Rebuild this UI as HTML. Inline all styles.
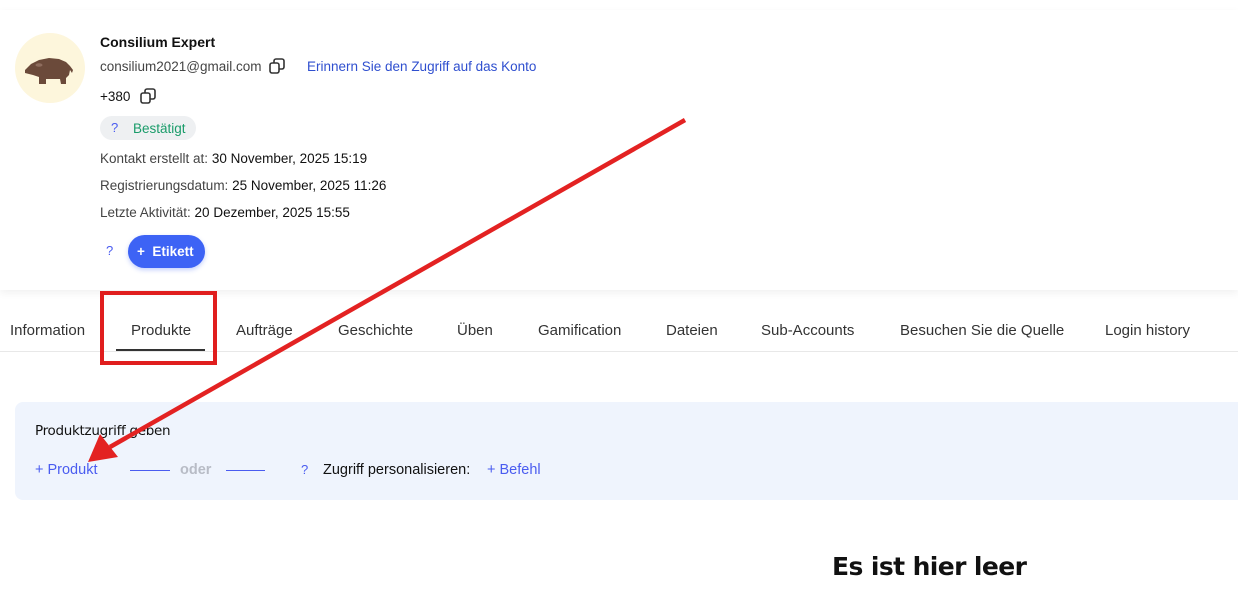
<!DOCTYPE html>
<html><head><meta charset="utf-8"><style>
*{margin:0;padding:0;box-sizing:border-box}
body{width:1238px;height:592px;background:#fff;font-family:"Liberation Sans",Arial,sans-serif;position:relative;overflow:hidden;color:#111}
.card{position:absolute;left:0;top:10px;width:1238px;height:280px;background:#fff;box-shadow:0 3px 8px rgba(0,0,0,0.06)}
.abs{position:absolute;white-space:nowrap}
.av{position:absolute;left:15px;top:33px;width:70px;height:70px;border-radius:50%;background:#fdf6dc}
.lbl{font-size:13.5px;color:#444}
.lbl b{font-weight:normal;color:#111}
.tab{position:absolute;top:322px;font-size:15px;color:#333}
</style></head><body>
<div class="card"></div>
<div class="av"><svg width="70" height="70" viewBox="0 0 70 70"><path d="M10 37 L16 31 L24 27 L34 25 L44 26 L51 29 L55 33 L58 37 L57 40 L55 37 L54 42 L51 45 L51 51 L46 51 L45 46 L31 46 L31 51 L24 51 L24 44 L18 42 L10 40 Z" fill="#6b4a3a"/><ellipse cx="24" cy="32" rx="3.5" ry="1.8" fill="#8e6d5e"/></svg></div>
<div class="abs" style="left:100px;top:34px;font-size:14px;font-weight:bold">Consilium Expert</div>
<div class="abs lbl" style="left:100px;top:59px">consilium2021@gmail.com</div>
<svg class="abs" style="left:268px;top:57px" width="18" height="18" viewBox="0 0 18 18" fill="none" stroke="#333" stroke-width="1.6"><rect x="2" y="6" width="9" height="10" rx="2"/><path d="M6 6V4a2 2 0 0 1 2-2h6a2 2 0 0 1 2 2v6a2 2 0 0 1-2 2h-3"/></svg>
<div class="abs" style="left:307px;top:59px;font-size:13.5px;color:#2f4fcf">Erinnern Sie den Zugriff auf das Konto</div>
<div class="abs" style="left:100px;top:89px;font-size:13.5px">+380</div>
<svg class="abs" style="left:139px;top:87px" width="18" height="18" viewBox="0 0 18 18" fill="none" stroke="#333" stroke-width="1.6"><rect x="2" y="6" width="9" height="10" rx="2"/><path d="M6 6V4a2 2 0 0 1 2-2h6a2 2 0 0 1 2 2v6a2 2 0 0 1-2 2h-3"/></svg>
<div class="abs" style="left:100px;top:116px;width:96px;height:24px;border-radius:12px;background:#eef0f2"></div>
<div class="abs" style="left:111px;top:120px;font-size:13px;color:#4a5cf0">?</div>
<div class="abs" style="left:133px;top:121px;font-size:13.5px;color:#1a9c6a">Bestätigt</div>
<div class="abs lbl" style="left:100px;top:151px">Kontakt erstellt at: <b>30 November, 2025 15:19</b></div>
<div class="abs lbl" style="left:100px;top:178px">Registrierungsdatum: <b>25 November, 2025 11:26</b></div>
<div class="abs lbl" style="left:100px;top:205px">Letzte Aktivität: <b>20 Dezember, 2025 15:55</b></div>
<div class="abs" style="left:106px;top:243px;font-size:13px;color:#4a5cf0">?</div>
<div class="abs" style="left:128px;top:235px;width:77px;height:33px;border-radius:17px;background:#3d63f5;color:#fff;font-size:13.5px;font-weight:bold;line-height:33px;padding-left:9px;box-shadow:0 2px 5px rgba(61,99,245,0.3)">+&nbsp; Etikett</div>
<div class="tab" style="left:10px">Information</div>
<div class="tab" style="left:131px">Produkte</div>
<div class="abs" style="left:116px;top:349px;width:89px;height:2px;background:#333"></div>
<div class="tab" style="left:236px">Aufträge</div>
<div class="tab" style="left:338px">Geschichte</div>
<div class="tab" style="left:457px">Üben</div>
<div class="tab" style="left:538px">Gamification</div>
<div class="tab" style="left:666px">Dateien</div>
<div class="tab" style="left:761px">Sub-Accounts</div>
<div class="tab" style="left:900px">Besuchen Sie die Quelle</div>
<div class="tab" style="left:1105px">Login history</div>
<div class="abs" style="left:0;top:351px;width:1238px;height:1px;background:#e8e8e8"></div>
<div class="abs" style="left:15px;top:402px;width:1240px;height:98px;border-radius:8px;background:#eff4fd"></div>
<div class="abs" style="left:35px;top:423px;font-family:'DejaVu Sans',sans-serif;font-size:13.5px;letter-spacing:-0.3px">Produktzugriff geben</div>
<div class="abs" style="left:35px;top:462px;font-size:14.5px;color:#4a5cf0">+ Produkt</div>
<div class="abs" style="left:130px;top:470px;width:40px;height:1px;background:#4a5cf0"></div>
<div class="abs" style="left:180px;top:462px;font-size:14.5px;color:#b8bcc6;font-weight:bold">oder</div>
<div class="abs" style="left:226px;top:470px;width:39px;height:1px;background:#4a5cf0"></div>
<div class="abs" style="left:301px;top:462px;font-size:13px;color:#4a5cf0">?</div>
<div class="abs" style="left:323px;top:462px;font-size:14.5px">Zugriff personalisieren:</div>
<div class="abs" style="left:487px;top:462px;font-size:14.5px;color:#4a5cf0">+ Befehl</div>
<div class="abs" style="left:832px;top:552px;font-size:25px;font-weight:bold;font-family:'DejaVu Sans',sans-serif;letter-spacing:-0.6px">Es ist hier leer</div>
<div class="abs" style="left:100px;top:291px;width:117px;height:74px;border:4px solid #e01e1e"></div>
<svg class="abs" style="left:0;top:0" width="1238" height="592"><line x1="685" y1="120" x2="110" y2="447" stroke="#e32222" stroke-width="4.5"/><polygon points="88,462 100,434 118,457" fill="#e32222"/></svg>
</body></html>
